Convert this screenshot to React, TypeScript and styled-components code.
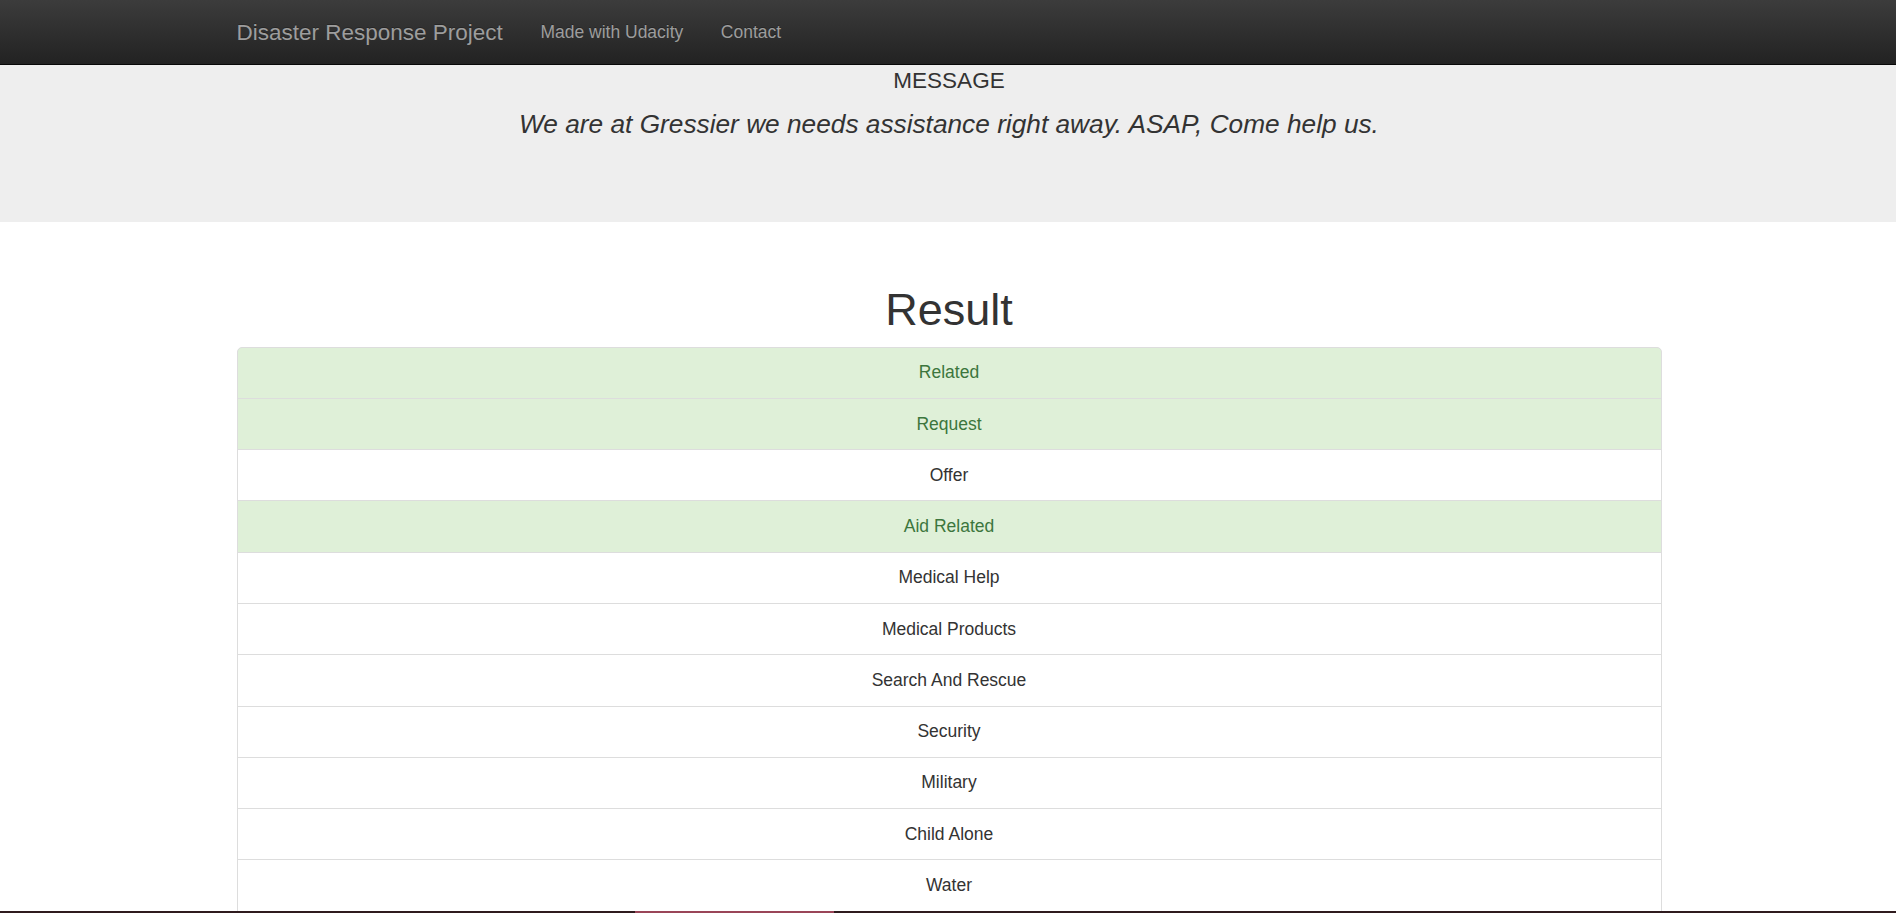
import React from "react";
import styled, { createGlobalStyle } from "styled-components";

const GlobalStyle = createGlobalStyle`
  html, body {
    margin: 0;
    padding: 0;
    overflow: hidden;
    background: #fff;
  }
  body {
    font-family: "Liberation Sans", Arial, Helvetica, sans-serif;
    font-size: 17.5px;
    line-height: 1.42857;
    color: #333;
  }
  * { box-sizing: border-box; }
`;

const Navbar = styled.nav`
  height: 65px;
  background-image: linear-gradient(to bottom, #3c3c3c 0, #222 100%);
  border-bottom: 1px solid #080808;
`;

const Container = styled.div`
  max-width: 1462.5px;
  margin: 0 auto;
  padding: 0 17.75px 0 19.75px;
  display: flow-root;
`;

const NavInner = styled.div`
  display: flex;
  align-items: center;
  height: 64px;
  margin-left: -18.75px;
`;

const Brand = styled.a`
  padding: 18.75px;
  font-size: 22.5px;
  line-height: 25px;
  color: #9d9d9d;
  text-decoration: none;
  text-shadow: 0 -1px 0 rgba(0, 0, 0, 0.25);
`;

const NavLink = styled.a`
  padding: 18.75px;
  font-size: 17.5px;
  line-height: 25px;
  color: #9d9d9d;
  text-decoration: none;
  text-shadow: 0 -1px 0 rgba(0, 0, 0, 0.25);
`;

const Jumbotron = styled.section`
  background: #eee;
  padding: 3.6px 0 60px;
  margin-bottom: 37.5px;
`;

const Label = styled.h4`
  margin: 0 0 12.5px;
  font-size: 22.5px;
  font-weight: 500;
  line-height: 1.1;
  text-align: center;
  color: #333;
`;

const Message = styled.p`
  margin: 0 0 18.75px;
  font-size: 26.25px;
  font-weight: 200;
  line-height: 37.5px;
  font-style: italic;
  text-align: center;
`;

const Title = styled.h1`
  margin: 25px 0 12.5px;
  font-size: 45px;
  font-weight: 500;
  line-height: 1.1;
  text-align: center;
`;

const ListGroup = styled.ul`
  margin: 0 0 25px;
  padding: 0;
  list-style: none;
`;

const Item = styled.li<{ $success?: boolean }>`
  padding: 12.65px 18.75px;
  line-height: 25px;
  font-size: 17.5px;
  text-align: center;
  border: 1px solid #ddd;
  margin-bottom: -1px;
  background: ${(p) => (p.$success ? "#dff0d8" : "#fff")};
  color: ${(p) => (p.$success ? "#3c763d" : "#333")};

  &:first-child {
    border-top-left-radius: 5px;
    border-top-right-radius: 5px;
  }
`;

const BottomStrip = styled.div`
  position: fixed;
  left: 0;
  right: 0;
  bottom: 0;
  height: 2px;
  background: linear-gradient(
    to right,
    #2f1b1e 0,
    #2f1b1e 635px,
    #9a4558 635px,
    #9a4558 834px,
    #2f1b1e 834px
  );
`;

const categories: [string, boolean][] = [
  ["Related", true],
  ["Request", true],
  ["Offer", false],
  ["Aid Related", true],
  ["Medical Help", false],
  ["Medical Products", false],
  ["Search And Rescue", false],
  ["Security", false],
  ["Military", false],
  ["Child Alone", false],
  ["Water", false],
  ["Food", false],
  ["Shelter", false],
  ["Clothing", false],
  ["Money", false],
  ["Missing People", false],
  ["Refugees", false],
  ["Death", false],
  ["Other Aid", false],
  ["Infrastructure Related", false],
  ["Transport", false],
  ["Buildings", false],
  ["Electricity", false],
  ["Tools", false],
  ["Hospitals", false],
  ["Shops", false],
  ["Aid Centers", false],
  ["Other Infrastructure", false],
  ["Weather Related", false],
  ["Floods", false],
  ["Storm", false],
  ["Fire", false],
  ["Earthquake", false],
  ["Cold", false],
  ["Other Weather", false],
  ["Direct Report", true],
];

export default function App() {
  return (
    <>
      <GlobalStyle />
      <Navbar>
        <Container>
          <NavInner>
            <Brand href="#">Disaster Response Project</Brand>
            <NavLink href="#">Made with Udacity</NavLink>
            <NavLink href="#">Contact</NavLink>
          </NavInner>
        </Container>
      </Navbar>
      <Jumbotron>
        <Container>
          <Label>MESSAGE</Label>
          <Message>
            We are at Gressier we needs assistance right away. ASAP, Come help us.
          </Message>
        </Container>
      </Jumbotron>
      <Container>
        <Title>Result</Title>
        <ListGroup>
          {categories.map(([name, ok]) => (
            <Item key={name} $success={ok}>
              {name}
            </Item>
          ))}
        </ListGroup>
      </Container>
      <BottomStrip />
    </>
  );
}
